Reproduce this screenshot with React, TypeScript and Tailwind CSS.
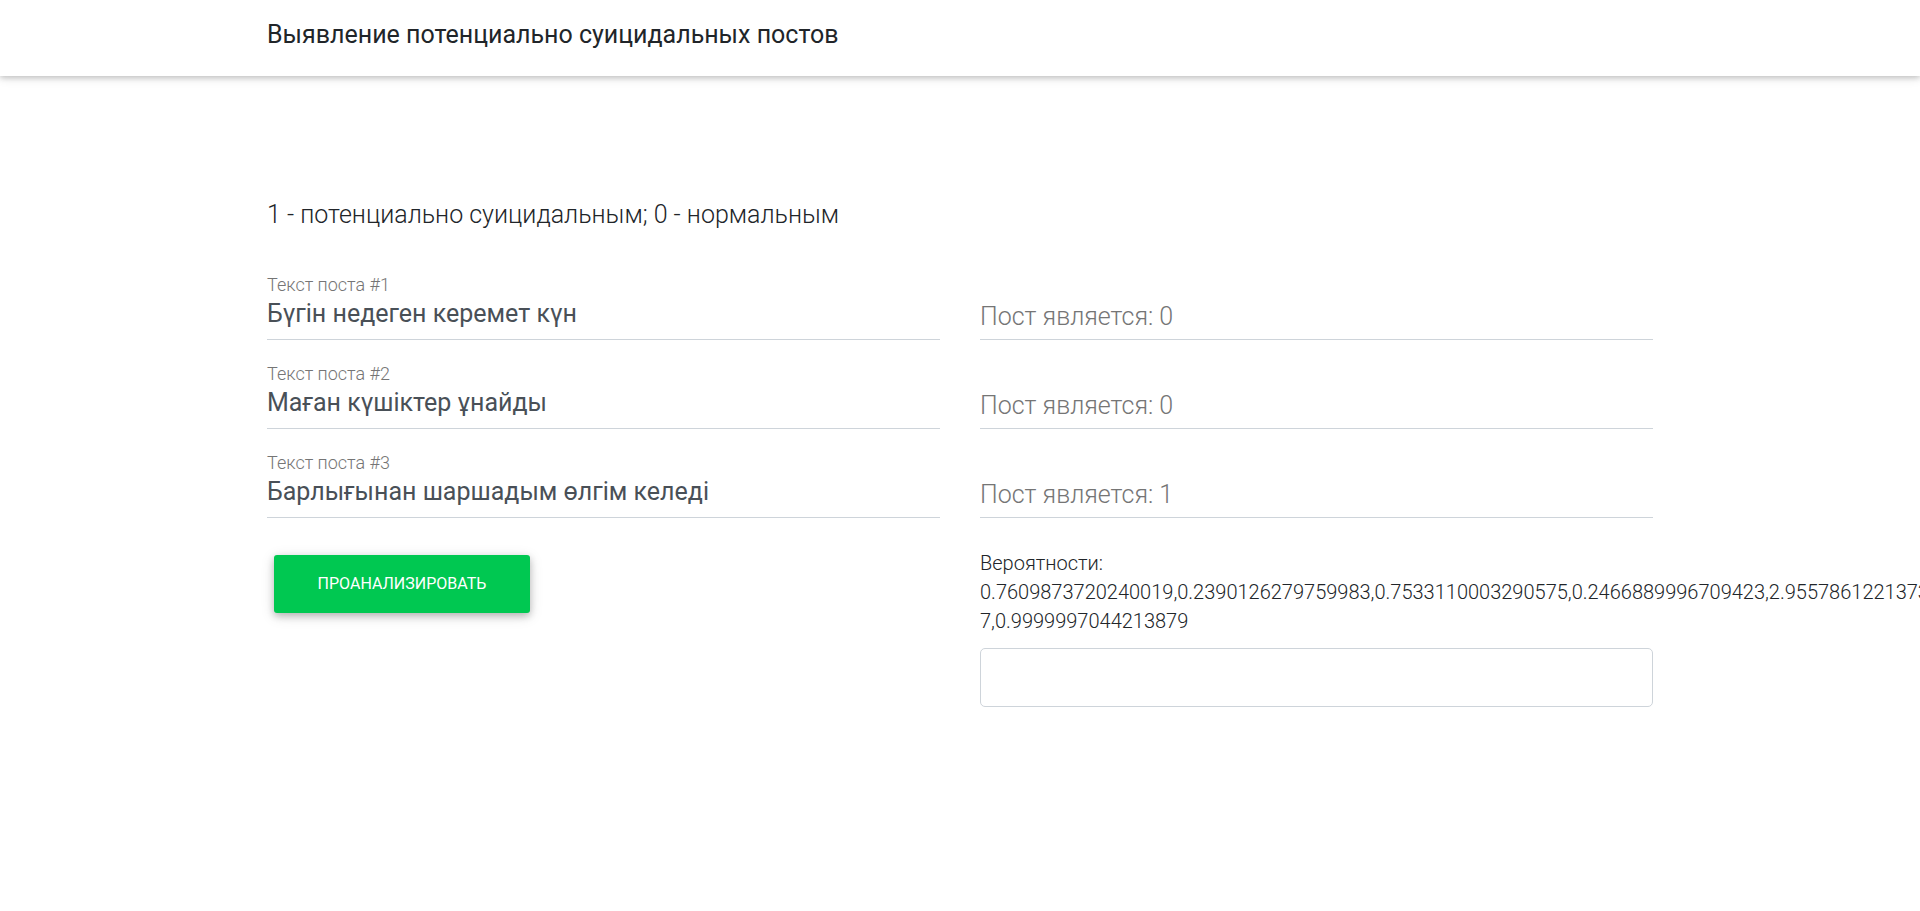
import React from "react";

const posts = [
  { label: "Текст поста #1", value: "Бүгін недеген керемет күн", result: "Пост является: 0" },
  { label: "Текст поста #2", value: "Маған күшіктер ұнайды", result: "Пост является: 0" },
  { label: "Текст поста #3", value: "Барлығынан шаршадым өлгім келеді", result: "Пост является: 1" },
];

const probs =
  "0.7609873720240019,0.2390126279759983,0.7533110003290575,0.2466889996709423,2.955786122137326e-7,0.9999997044213879";

export default function App() {
  return (
    <div className="min-h-[911px] w-full overflow-hidden bg-white font-['Roboto',sans-serif]">
      <header className="h-[76px] w-full bg-white shadow-[0_2px_5px_0_rgba(0,0,0,0.16),0_2px_10px_0_rgba(0,0,0,0.12)]">
        <div className="mx-auto flex h-full w-[1386px] items-center pb-[6px]">
          <h1 className="text-[25px] font-normal leading-[30px] text-[#212529]">
            Выявление потенциально суицидальных постов
          </h1>
        </div>
      </header>

      <main className="mx-auto w-[1386px] pt-[124px]">
        <p className="text-[25px] font-light leading-[30px] text-[#212529]">
          1 - потенциально суицидальным; 0 - нормальным
        </p>

        <div className="mt-[45px] flex gap-[40px]">
          <div className="flex w-[673px] flex-col">
            {posts.map((p, i) => (
              <div key={i} className={i < posts.length - 1 ? "mb-[24px]" : ""}>
                <div className="h-[20px] text-[18px] font-light leading-[20px] text-[#757575]">{p.label}</div>
                <div className="h-[45px] border-b border-[#ced4da] pt-[4px] text-[25px] font-normal leading-[30px] text-[#495057]">
                  {p.value}
                </div>
              </div>
            ))}
            <div>
              <button className="ml-[7px] mt-[37px] h-[58px] w-[256px] rounded-[3px] bg-[#00c851] text-[16px] font-normal uppercase text-white shadow-[0_3px_7px_0_rgba(0,0,0,0.2),0_3px_14px_0_rgba(0,0,0,0.15)]">
                Проанализировать
              </button>
            </div>
          </div>

          <div className="flex w-[673px] flex-col">
            {posts.map((p, i) => (
              <div key={i} className={i < posts.length - 1 ? "mb-[24px]" : ""}>
                <div className="h-[20px]" />
                <div className="h-[45px] border-b border-[#ced4da] pt-[7px] text-[25px] font-light leading-[30px] text-[#757575]">
                  {p.result}
                </div>
              </div>
            ))}
            <div className="mt-[31px] text-[20px] font-light leading-[29px] text-[#212529]">
              <div>Вероятности:</div>
              <div>{probs}</div>
            </div>
            <div className="mt-[12px] h-[59px] w-full rounded-[5px] border border-[#ced4da] bg-white" />
          </div>
        </div>
      </main>
    </div>
  );
}
